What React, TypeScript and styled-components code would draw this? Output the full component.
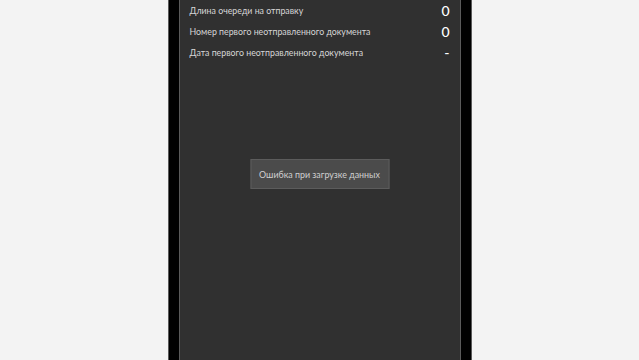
import styled, { createGlobalStyle } from 'styled-components';

const colors = {
  page: '#f3f3f3',
  bezel: '#000000',
  bezelLine: '#5a5a5a',
  screen: '#303030',
  label: '#d6d6d6',
  value: '#ffffff',
  toastBg: '#4b4b4b',
  toastBorder: '#5c5c5c',
  toastText: '#d0d0d0',
};

const GlobalStyle = createGlobalStyle`
  html, body {
    margin: 0;
    padding: 0;
    height: 100%;
    background: ${colors.page};
    font-family: Lato, 'Open Sans', sans-serif;
    overflow: hidden;
  }
  #root {
    height: 100%;
  }
`;

const Page = styled.div`
  display: flex;
  justify-content: center;
  height: 100%;
`;

const Device = styled.div`
  width: 304px;
  height: 100%;
  box-sizing: border-box;
  background: ${colors.bezel};
  border-left: 1px solid ${colors.bezelLine};
  border-right: 1px solid ${colors.bezelLine};
  padding: 0 10px;
  display: flex;
`;

const Screen = styled.div`
  position: relative;
  flex: 1;
  background: ${colors.screen};
  border-left: 1px solid ${colors.bezelLine};
  border-right: 1px solid ${colors.bezelLine};
  padding: 0 10px;
  display: flex;
  flex-direction: column;
`;

const Row = styled.div`
  display: flex;
  align-items: center;
  justify-content: space-between;
  height: 21px;
`;

const Label = styled.span`
  font-size: 8.8px;
  color: ${colors.label};
`;

const Value = styled.span`
  font-size: 14px;
  font-weight: 500;
  color: ${colors.value};
`;

const Toast = styled.div`
  position: absolute;
  top: 159px;
  left: 50%;
  transform: translateX(-50%);
  width: 139px;
  height: 30px;
  box-sizing: border-box;
  display: flex;
  align-items: center;
  justify-content: center;
  background: ${colors.toastBg};
  border: 1px solid ${colors.toastBorder};
  color: ${colors.toastText};
  font-size: 8.9px;
  white-space: nowrap;
`;

const rows = [
  { label: 'Длина очереди на отправку', value: '0' },
  { label: 'Номер первого неотправленного документа', value: '0' },
  { label: 'Дата первого неотправленного документа', value: '-' },
];

export default function App() {
  return (
    <>
      <GlobalStyle />
      <Page>
        <Device>
          <Screen>
            {rows.map((row) => (
              <Row key={row.label}>
                <Label>{row.label}</Label>
                <Value>{row.value}</Value>
              </Row>
            ))}
            <Toast>Ошибка при загрузке данных</Toast>
          </Screen>
        </Device>
      </Page>
    </>
  );
}
